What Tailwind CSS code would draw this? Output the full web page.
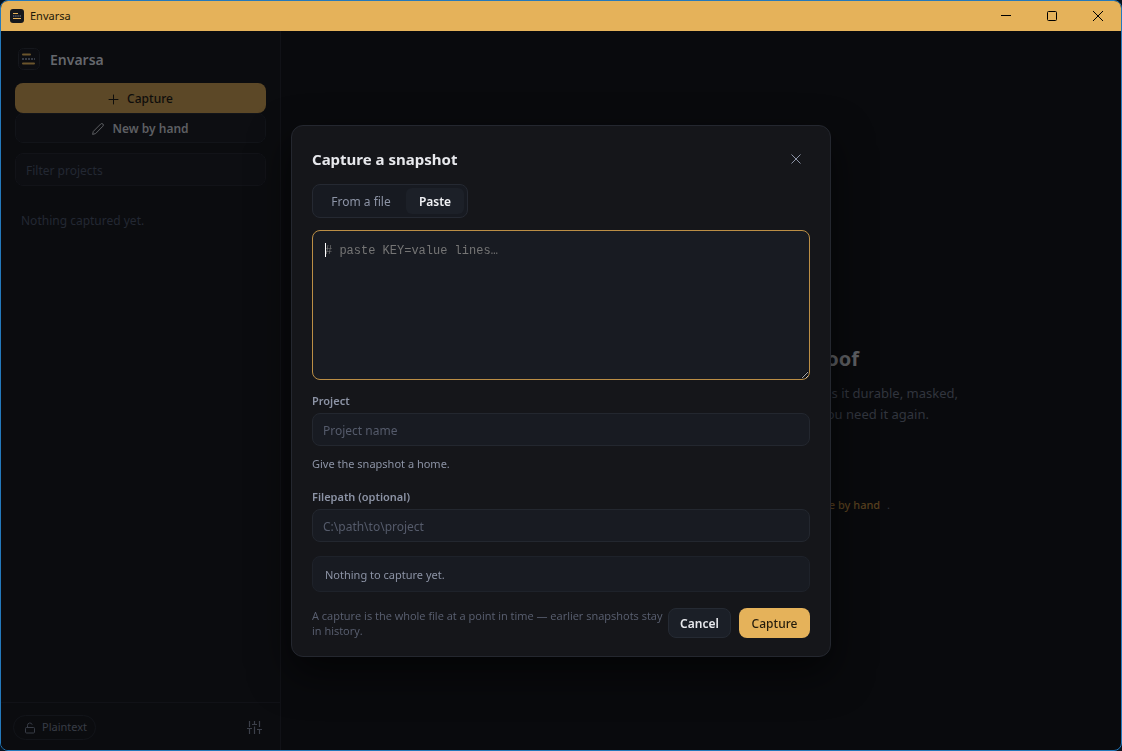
<!DOCTYPE html>
<html lang="en">
<head>
<meta charset="utf-8">
<title>Envarsa</title>
<script src="https://cdn.jsdelivr.net/npm/@tailwindcss/browser@4"></script>
</head>
<body class="bg-[#06131f] font-['Segoe_UI','Noto_Sans',sans-serif] text-xs">
<div class="flex h-screen flex-col overflow-hidden rounded-lg border border-[#2479bb] bg-[#090a0d]">
  <header class="flex h-[30px] shrink-0 items-center bg-[#e5b25a] pl-[9px] text-[#1d1809]">
    <svg class="size-[14px]" viewBox="0 0 14 14" aria-hidden="true"><rect width="14" height="14" rx="3" fill="#15171c"/><path d="M3 4.500h5M3 9.500h8" stroke="#e5b25a" stroke-width="1.200"/><path d="M3 7h8" stroke="#7d8494" stroke-width="1.200" stroke-dasharray="1.400 .8"/></svg>
    <span class="ml-1.5 text-[11px]">Envarsa</span>
    <div class="ml-auto flex h-full">
      <button aria-label="Minimize" class="flex w-[46px] items-center justify-center"><svg class="size-[10px]" viewBox="0 0 10 10" stroke="#000" fill="none"><path d="M0 4.500h10"/></svg></button>
      <button aria-label="Maximize" class="flex w-[46px] items-center justify-center"><svg class="size-[10px]" viewBox="0 0 10 10" stroke="#000" fill="none"><rect x=".5" y=".5" width="9" height="9" rx="1"/></svg></button>
      <button aria-label="Close" class="flex w-[46px] items-center justify-center"><svg class="size-[10px]" viewBox="0 0 10 10" stroke="#000" fill="none"><path d="M0 0l10 10M10 0L0 10"/></svg></button>
    </div>
  </header>
  <div class="flex min-h-0 flex-1">
    <aside class="flex w-[280px] shrink-0 flex-col border-r border-[#111217] bg-[#0b0c0f]">
      <div class="flex flex-1 flex-col px-3.5 pt-[17px]">
        <div class="flex h-[22px] items-center gap-2.5 pl-[3px]">
          <svg class="size-[22px]" viewBox="0 0 22 22" fill="none" aria-hidden="true"><rect x=".5" y=".5" width="21" height="21" rx="5" fill="#0c0d11" stroke="#15171c"/><path d="M5 6.500h7M5 15.500h11" stroke="#6b552c" stroke-width="2" stroke-linecap="round"/><path d="M4 11h13" stroke="#363b45" stroke-width="2" stroke-dasharray="2 1"/></svg>
          <span class="pt-0.5 text-sm font-semibold text-[#65676c]">Envarsa</span>
        </div>
        <button class="mt-[13px] flex h-[30px] items-center justify-center gap-2 rounded-lg bg-[#5c4827] pt-0.5 font-medium text-[#0e0d0b]">
          <svg class="size-[11px]" viewBox="0 0 11 11" stroke="currentColor" fill="none"><path d="M5.500 1v9M1 5.500h9" stroke-linecap="round"/></svg>Capture</button>
        <button class="flex h-[30px] items-center justify-center gap-2 rounded-lg border border-[#121419] bg-[#0d0e12] pt-0.5 font-semibold text-[#5d5f63]">
          <svg class="size-[12px]" viewBox="0 0 12 12" stroke="currentColor" fill="none" stroke-linejoin="round"><path d="M.6 11.400l.7-3L8.700 1a1.500 1.500 0 0 1 2.200 2.200L3.600 10.600z"/></svg>New by hand</button>
        <input aria-label="Filter projects" placeholder="Filter projects" class="mt-2.5 h-[33px] rounded-lg border border-[#121318] bg-[#0d0e12] px-2.5 pt-0.5 placeholder:text-[#232833]">
        <p class="mt-[27px] pl-1.5 text-[#232833]">Nothing captured yet.</p>
      </div>
      <div class="flex h-[48px] items-center justify-between border-t border-[#111217] px-3 pt-0.5">
        <button class="flex h-[25px] items-center gap-1.5 rounded-full border border-[#121419] pr-2 pl-2.5 text-[11px] text-[#383c46]">
          <svg class="size-3" viewBox="0 0 12 12" stroke="currentColor" fill="none"><rect x="1.500" y="5.500" width="9" height="5.500" rx="1"/><path d="M3.500 5.500V3.300a2.400 2.400 0 0 1 4.700-.6"/></svg>Plaintext</button>
        <button aria-label="Settings" class="mr-1.5 text-[#3c404a]"><svg class="size-[15px]" viewBox="0 0 15 15" stroke="currentColor" fill="none" stroke-width="1.200"><path d="M2.500 1v6M2.500 9v5M7.500 1v3M7.500 6.500V14M12.500 1v6M12.500 10v4M0 8.500h5M5 4.500h5M10 9.500h5"/></svg></button>
      </div>
    </aside>
    <main class="flex flex-1 flex-col pt-[314px] text-right text-[#31353e]">
      <h1 class="mx-auto h-[30px] w-[316px] text-xl font-bold text-[#5d5f63]">Envarsa keeps proof</h1>
      <p class="mx-auto mt-[8px] w-[514px] text-[13px] leading-[21px]">keeps it durable, masked,</p>
      <p class="mx-auto w-[456px] text-[13px] leading-[21px]">when you need it again.</p>
      <p class="mx-auto mt-[71px] w-[378px] text-[11px] leading-[18px]">or <a href="#" class="mr-1 font-medium text-[#58401f]">create by hand</a> .</p>
    </main>
  </div>
</div>

<div class="fixed inset-0 flex items-center justify-center pt-[31px]">
  <section role="dialog" aria-labelledby="dialog-title" class="w-full max-w-[540px] rounded-xl border border-[#24272f] bg-[#15161a] px-5 pt-5 pb-[18px] shadow-[0_16px_40px_rgba(0,0,0,0.6)]">
    <div class="flex h-[26px] items-center justify-between">
      <h2 id="dialog-title" class="text-[15px] font-bold text-[#e7e8ec]">Capture a snapshot</h2>
      <button aria-label="Close dialog" class="flex h-[26px] w-7 items-center justify-center pb-px text-[#8c93a5]"><svg class="size-[10px]" viewBox="0 0 10 10" stroke="currentColor"><path d="M.5.5l9 9M9.500.5l-9 9"/></svg></button>
    </div>
    <div class="mt-3 flex h-[34px] w-[156px] rounded-lg border border-[#252932] bg-[#171a21] p-[3px]">
      <button class="flex-1 pt-0.5 text-[#8c93a5]">From a file</button>
      <button class="w-[58px] rounded-md bg-[#1c2028] pt-0.5 font-semibold text-[#f1f2f5]">Paste</button>
    </div>
    <div class="relative mt-3">
      <textarea aria-label="Environment lines" placeholder="# paste KEY=value lines…" class="block h-[150px] w-full resize rounded-lg border border-[#bb8e45] bg-[#181b22] px-3 py-[11px] font-['Liberation_Mono',monospace] leading-[18px] text-[#e7e8ec] placeholder:text-[#757575]"></textarea>
      <span class="absolute top-[13px] left-[13px] h-[14px] w-px bg-white"></span>
    </div>
    <label for="project" class="mt-3 block text-[11px] leading-[18px] font-semibold text-[#8c93a5]">Project</label>
    <input id="project" placeholder="Project name" class="mt-[3px] block h-[33px] w-full rounded-lg border border-[#23272f] bg-[#181b22] px-2.5 pt-0.5 placeholder:text-[#555b6b]">
    <p class="mt-[9px] text-[11px] leading-[18px] text-[#8c93a5]">Give the snapshot a home.</p>
    <label for="path" class="mt-[15px] block text-[11px] leading-[18px] font-semibold text-[#8c93a5]">Filepath (optional)</label>
    <input id="path" placeholder="C:\path\to\project" class="mt-[3px] block h-[33px] w-full rounded-lg border border-[#23272f] bg-[#181b22] px-2.5 pt-0.5 placeholder:text-[#555b6b]">
    <div class="mt-3.5 flex h-9 items-center rounded-lg border border-[#1e222a] bg-[#181b22] px-3 pt-0.5 text-[11px] text-[#8c93a5]">Nothing to capture yet.</div>
    <div class="mt-4 flex h-[30px] items-center gap-2">
      <p class="-mr-1.5 flex-1 font-['Segoe_UI','Open_Sans',sans-serif] text-[11px] leading-[15px] text-[#5a6071]">A capture is the whole file at a point in time — earlier snapshots stay in history.</p>
      <button class="h-[30px] w-[63px] shrink-0 rounded-lg border border-[#252a33] bg-[#1b1f27] pt-0.5 font-semibold text-[#e7e8ec]">Cancel</button>
      <button class="h-[30px] w-[71px] shrink-0 rounded-lg bg-[#e5b25a] pt-0.5 font-medium text-[#241c0c]">Capture</button>
    </div>
  </section>
</div>
</body>
</html>
